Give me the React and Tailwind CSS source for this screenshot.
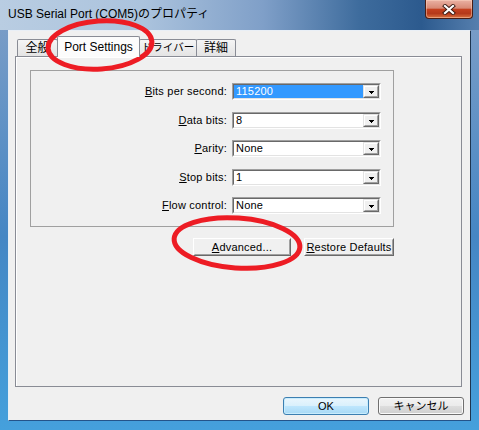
import React from 'react';

// classic sunken combo box with a raised drop button
const Combo = ({ value, selected }) => (
  <div className="w-[149px] h-[17px] border border-t-[#a0a0a0] border-l-[#a0a0a0] border-b-white border-r-white">
    <div className="h-full flex bg-white border border-t-[#696969] border-l-[#696969] border-b-[#e3e3e3] border-r-[#e3e3e3]">
      <div className="flex-1 flex items-stretch">
        <div
          className={`flex items-center pl-[2px] leading-none tracking-[0.2px] ${
            selected ? 'flex-1 bg-[#3399ff] text-white' : 'text-black'
          }`}
        >
          {value}
        </div>
      </div>
      <div className="w-[16px] h-full bg-[#f0f0f0] border border-t-[#e3e3e3] border-l-[#e3e3e3] border-b-[#696969] border-r-[#696969] flex">
        <div className="flex-1 flex items-center justify-center border border-t-white border-l-white border-b-[#a0a0a0] border-r-[#a0a0a0]">
          <svg width="5" height="3" viewBox="0 0 5 3" shapeRendering="crispEdges" className="mt-[2px]">
            <rect x="0" y="0" width="5" height="1" fill="#000" />
            <rect x="1" y="1" width="3" height="1" fill="#000" />
            <rect x="2" y="2" width="1" height="1" fill="#000" />
          </svg>
        </div>
      </div>
    </div>
  </div>
);

const Row = ({ accel, rest, value, selected }) => (
  <div className="flex items-center h-[17px]">
    <div className="w-[201px] pr-[5px] text-right leading-none tracking-[0.2px]">
      <span className="underline underline-offset-[1px]">{accel}</span>
      {rest}
    </div>
    <Combo value={value} selected={selected} />
  </div>
);

// classic raised push button
const ClassicButton = ({ width, children }) => (
  <div className={`${width} h-[18px] bg-[#f0f0f0] border border-t-white border-l-white border-b-[#696969] border-r-[#696969]`}>
    <div className="h-full flex items-center justify-center leading-none tracking-[0.2px] border border-t-[#f0f0f0] border-l-[#f0f0f0] border-b-[#a0a0a0] border-r-[#a0a0a0]">
      {children}
    </div>
  </div>
);

const Tab = ({ width, active, textClass = 'text-[12px]', first, children }) => (
  <div
    className={`${width} ${first ? 'ml-[2px]' : '-ml-px'} flex items-center justify-center border border-b-0 border-[#898c95] rounded-t-[2px] ${textClass} ${
      active
        ? 'relative z-10 h-[21px] -mb-px bg-[#fcfcfc] pb-[1px]'
        : 'h-[17px] bg-[linear-gradient(to_bottom,#f5f5f5,#e4e4e4)]'
    }`}
  >
    {children}
  </div>
);

export default function App() {
  return (
    <div className="relative w-[479px] h-[430px] overflow-hidden flex flex-col text-[11px] text-black font-['Liberation_Sans','Noto_Sans_CJK_JP',sans-serif] bg-[linear-gradient(180deg,#7f9fc7_0%,#4586c4_55%,#45a0dc_100%)]">
      {/* Title bar */}
      <div className="h-[30px] shrink-0 flex items-start bg-[linear-gradient(90deg,#b9cde2_0%,#abc3dd_30%,#7f9fc8_55%,#3e6c9d_75%,#2c5a8e_88%,#567fae_100%)]">
        <div className="pl-[8px] pt-[6px] text-[12px] leading-[16px] text-black">
          USB Serial Port (COM5)のプロパティ
        </div>
        <div className="ml-auto mr-[6px] w-[48px] h-[19px] rounded-b-[4px] border border-t-0 border-[#4a1d14] bg-[linear-gradient(to_bottom,#eab1a3_0%,#d88a76_45%,#c4401f_52%,#b5391b_75%,#d9713f_100%)] flex items-center justify-center shadow-[inset_0_0_0_1px_rgba(255,220,200,0.45)]">
          <svg width="14" height="11" viewBox="0 0 14 11">
            <path d="M3 2 L11 9 M11 2 L3 9" stroke="#3b1a12" strokeWidth="4" strokeLinecap="square" />
            <path d="M3 2 L11 9 M11 2 L3 9" stroke="#ffffff" strokeWidth="2.2" strokeLinecap="square" />
          </svg>
        </div>
      </div>

      {/* Client area */}
      <div className="mx-[8px] h-[391px] flex flex-col bg-[#f0f0f0] border border-t-[#e9eff6] border-l-[#e9eff6] border-r-[#1d3550] border-b-[#24548a] pl-[6px] pt-[5px]">
        {/* Tabs */}
        <div className="h-[20px] flex items-end">
          <Tab width="w-[41px]" first>全般</Tab>
          <Tab width="w-[83px]" active>Port Settings</Tab>
          <Tab width="w-[58px]" textClass="text-[10.5px]">ドライバー</Tab>
          <Tab width="w-[40px]">詳細</Tab>
        </div>

        {/* Tab panel */}
        <div className="w-[447px] h-[331px] border border-[#898c95] shadow-[inset_1px_1px_0_#ffffff] pl-[14px] pt-[13px]">
          {/* Group box */}
          <div className="w-[364px] h-[157px] border border-[#a0a0a0] pt-[12px] flex flex-col gap-[11.5px]">
            <Row accel="B" rest="its per second:" value="115200" selected />
            <Row accel="D" rest="ata bits:" value="8" />
            <Row accel="P" rest="arity:" value="None" />
            <Row accel="S" rest="top bits:" value="1" />
            <Row accel="F" rest="low control:" value="None" />
          </div>

          <div className="w-[364px] mt-[11px] flex justify-end gap-[13px]">
            <ClassicButton width="w-[98px]">
              <span>
                <span className="underline underline-offset-[1px]">A</span>dvanced...
              </span>
            </ClassicButton>
            <ClassicButton width="w-[90px]">
              <span>
                <span className="underline underline-offset-[1px]">R</span>estore Defaults
              </span>
            </ClassicButton>
          </div>
        </div>

        {/* Dialog buttons */}
        <div className="mt-[10px] pr-[6px] flex justify-end gap-[9px]">
          <div className="w-[86px] h-[18px] rounded-[3px] border border-[#3c7fb1] shadow-[inset_0_0_0_1px_#c8ecfd] bg-[linear-gradient(to_bottom,#eaf6fd_0%,#d9f0fc_50%,#bee6fd_51%,#a7d9f5_100%)] flex items-center justify-center text-[11px] leading-none">
            OK
          </div>
          <div className="w-[86px] h-[18px] rounded-[3px] border border-[#707070] shadow-[inset_0_0_0_1px_#fafafa] bg-[linear-gradient(to_bottom,#f2f2f2_0%,#ebebeb_50%,#dddddd_51%,#cfcfcf_100%)] flex items-center justify-center text-[11px] leading-none">
            キャンセル
          </div>
        </div>
      </div>

      {/* Red hand-drawn annotations */}
      <svg className="absolute inset-0 pointer-events-none" width="479" height="430" viewBox="0 0 479 430">
        <ellipse cx="100" cy="45" rx="52" ry="24" fill="none" stroke="#ed1c24" strokeWidth="5" transform="rotate(-4 100 45)" />
        <ellipse cx="237" cy="243" rx="63" ry="25" fill="none" stroke="#ed1c24" strokeWidth="5" transform="rotate(4 237 243)" />
      </svg>
    </div>
  );
}
